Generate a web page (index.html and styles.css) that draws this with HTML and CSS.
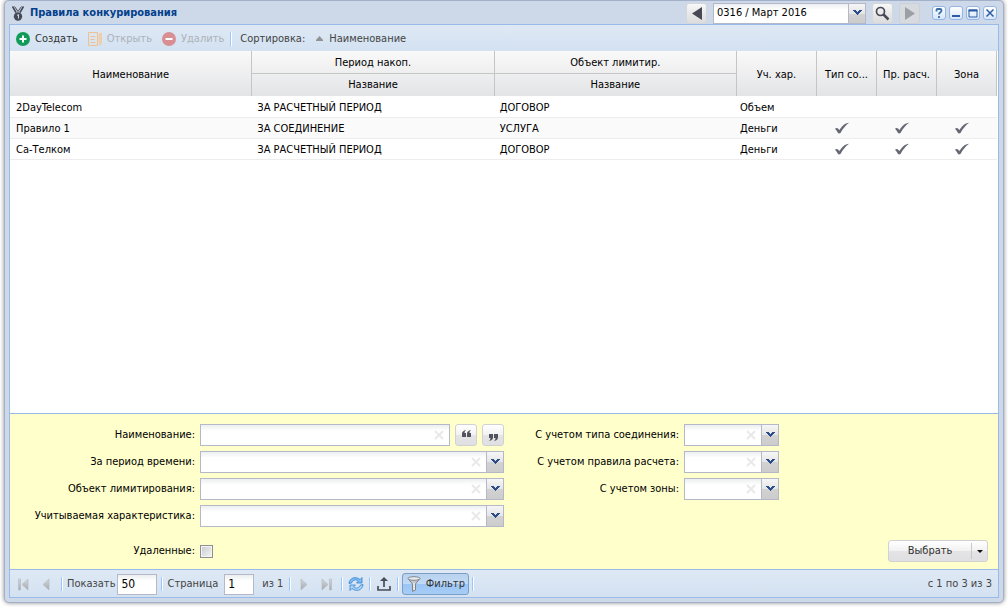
FILE: index.html
```html
<!DOCTYPE html>
<html lang="ru">
<head>
<meta charset="utf-8">
<title>Правила конкурирования</title>
<link rel="stylesheet" href="styles.css">
</head>
<body>
<svg class="defs" aria-hidden="true">
  <defs>
    <linearGradient id="fade" x1="0" y1="0" x2="0" y2="1"><stop offset="0" stop-color="#d4d8dc"/><stop offset="1" stop-color="#a4a9af"/></linearGradient>
    <symbol id="tick" viewBox="0 0 16 12"><path d="M1 6.800 C2 5.800 3.300 5.800 4 6.500 L5.500 8 C8 4 11 1 15 .8 C11.500 3.500 9 6.500 6.500 11 C5.500 11.700 4.500 11.500 4 11 C3.300 9.500 2.200 8 1 6.800Z" fill="#666873"/></symbol>
    <symbol id="cross" viewBox="0 0 10 10"><path d="M1 1 L9 9 M9 1 L1 9" stroke="#e9e9e9" stroke-width="2"/></symbol>
    <symbol id="chev" viewBox="0 0 9 7"><path d="M0 1h3v1h1v1h1v-1h1v-1h3v1h-1v1h-1v1h-1v1h-1v1h-1v-1h-1v-1h-1v-1h-1v-1h-1z" fill="#2b4d8c"/></symbol>
  </defs>
</svg>
<main class="window">
  <header class="titlebar">
    <svg class="medal" width="12" height="15" viewBox="0 0 12 15"><path d="M0.500 0.500 L4 6.500 M11.500 0.500 L8 6.500" stroke="#474b55" stroke-width="1.600"/><path d="M2.500 0.500 L6 5.500 L9.500 .5" fill="none" stroke="#474b55"/><circle cx="6" cy="10.500" r="4.200" fill="#474b55"/><path d="M5 9.500 6.500 8.500V12.500" stroke="#cdd9e8" fill="none"/></svg>
    <h1>Правила конкурирования</h1>
    <div class="period">
      <button class="square" aria-label="Предыдущий период"><svg width="11" height="13" viewBox="0 0 11 13"><path d="M11 0V13L1 6.500z" fill="#474955"/></svg></button>
      <span class="combo month"><select aria-label="Период"><option>0316 / Март 2016</option></select><span class="trigger"><svg width="9" height="7"><use href="#chev"/></svg></span></span>
      <button class="square" aria-label="Найти"><svg width="15" height="15" viewBox="0 0 15 15"><circle cx="5.500" cy="5.500" r="4" fill="none" stroke="#474955" stroke-width="1.700"/><path d="M8.500 8.500 13.500 13.500" stroke="#474955" stroke-width="2.500"/></svg></button>
      <button class="square" disabled aria-label="Следующий период"><svg width="11" height="13" viewBox="0 0 11 13"><path d="M1 0V13L11 6.500z" fill="#9c9fa4"/></svg></button>
    </div>
    <div class="tools">
      <button aria-label="Справка"><svg width="14" height="14" viewBox="0 0 14 14"><path d="M4.500 5.500V4Q4.500 3 5.500 3H8Q9.500 3 9.500 4.500Q9.500 5.500 8.500 6.200Q7 7 7 8.500M7 10v2" fill="none" stroke="#3a6ea8" stroke-width="1.800"/></svg></button>
      <button aria-label="Свернуть"><svg width="14" height="14"><path d="M3 9h8v2H3z" fill="#2d5ca4"/></svg></button>
      <button aria-label="Развернуть"><svg width="14" height="14"><path d="M3 4h8v7H3z" fill="none" stroke="#2d5ca4"/><path d="M2.500 3.500h9v2h-9z" fill="#2d5ca4"/></svg></button>
      <button aria-label="Закрыть"><svg width="14" height="14"><path d="M3.500 3.500l7 7m0-7l-7 7" stroke="#2d5ca4" stroke-width="1.500"/></svg></button>
    </div>
  </header>
  <div class="panel">
    <div class="toolbar">
      <button class="tool create"><svg width="14" height="14" viewBox="0 0 14 14"><circle cx="7" cy="7" r="7" fill="#109b58"/><path d="M7 3.500v7M3.500 7h7" stroke="#fff" stroke-width="2"/></svg>Создать</button>
      <button class="tool open" disabled><svg width="14" height="14" viewBox="0 0 14 14"><path d="M.5.5H9.500V13.500H.5zM2.500 4.500h5M2.500 7.500h4M2.500 10.500h5" fill="none" stroke="#f0c08e"/><path d="M11 2l2.500-1v9.500l-1.500 3-1-3z" fill="#f3cfa9" stroke="#f0c08e" stroke-width=".5"/></svg>Открыть</button>
      <button class="tool" disabled><svg width="14" height="14" viewBox="0 0 14 14"><circle cx="7" cy="7" r="7" fill="#d98e94"/><path d="M3.500 7h7" stroke="#fff" stroke-width="2"/></svg>Удалить</button>
      <span class="sep"></span>
      <span class="sort">Сортировка:</span>
      <button class="tool"><svg width="9" height="5" viewBox="0 0 9 5"><path d="M4.500 0 8 4v1H1V4z" fill="#929292"/></svg><span class="sortname">Наименование</span></button>
    </div>
    <div class="grid">
      <table>
        <colgroup><col><col><col><col class="kind"><col class="flag"><col class="flag"><col class="flag"></colgroup>
        <thead>
          <tr><th rowspan="2">Наименование</th><th class="group">Период накоп.</th><th class="group">Объект лимитир.</th><th rowspan="2">Уч. хар.</th><th rowspan="2">Тип со...</th><th rowspan="2">Пр. расч.</th><th rowspan="2">Зона</th></tr>
          <tr><th class="sub">Название</th><th class="sub">Название</th></tr>
        </thead>
        <tbody>
          <tr><td>2DayTelecom</td><td>ЗА РАСЧЕТНЫЙ ПЕРИОД</td><td>ДОГОВОР</td><td class="mark">Объем</td><td></td><td></td><td></td></tr>
          <tr><td>Правило 1</td><td>ЗА СОЕДИНЕНИЕ</td><td>УСЛУГА</td><td class="mark">Деньги</td><td class="tick"><svg width="16" height="12"><use href="#tick"/></svg></td><td class="tick"><svg width="16" height="12"><use href="#tick"/></svg></td><td class="tick"><svg width="16" height="12"><use href="#tick"/></svg></td></tr>
          <tr><td>Са-Телком</td><td>ЗА РАСЧЕТНЫЙ ПЕРИОД</td><td>ДОГОВОР</td><td class="mark">Деньги</td><td class="tick"><svg width="16" height="12"><use href="#tick"/></svg></td><td class="tick"><svg width="16" height="12"><use href="#tick"/></svg></td><td class="tick"><svg width="16" height="12"><use href="#tick"/></svg></td></tr>
        </tbody>
      </table>
    </div>
    <form class="filter">
      <div class="columns">
        <div class="fields wide">
          <label for="name">Наименование:</label>
          <div class="line">
            <span class="combo text"><input id="name" type="text"><svg class="clear" width="10" height="10"><use href="#cross"/></svg></span>
            <button type="button" class="quote" aria-label="Открывающая кавычка"><svg width="9" height="8" viewBox="0 0 9 8"><path d="M4 0Q2.500 1 2.500 3H4V7H0V3.500Q0 1 4 0M9 0Q7.500 1 7.500 3H9V7H5V3.500Q5 1 9 0" fill="#50525c"/></svg></button>
            <button type="button" class="quote low" aria-label="Закрывающая кавычка"><svg width="9" height="8" viewBox="0 0 9 8"><path d="M0 8Q1.500 7 1.500 5H0V1H4V4.500Q4 7 0 8M5 8Q6.500 7 6.500 5H5V1H9V4.500Q9 7 5 8" fill="#50525c"/></svg></button>
          </div>
          <label for="time">За период времени:</label>
          <span class="combo"><select id="time"><option></option></select><svg class="clear" width="10" height="10"><use href="#cross"/></svg><span class="trigger"><svg width="9" height="7"><use href="#chev"/></svg></span></span>
          <label for="object">Объект лимитирования:</label>
          <span class="combo"><select id="object"><option></option></select><svg class="clear" width="10" height="10"><use href="#cross"/></svg><span class="trigger"><svg width="9" height="7"><use href="#chev"/></svg></span></span>
          <label for="feature">Учитываемая характеристика:</label>
          <span class="combo"><select id="feature"><option></option></select><svg class="clear" width="10" height="10"><use href="#cross"/></svg><span class="trigger"><svg width="9" height="7"><use href="#chev"/></svg></span></span>
        </div>
        <div class="fields narrow">
          <label for="type">С учетом типа соединения:</label>
          <span class="combo"><select id="type"><option></option></select><svg class="clear" width="10" height="10"><use href="#cross"/></svg><span class="trigger"><svg width="9" height="7"><use href="#chev"/></svg></span></span>
          <label for="rule">С учетом правила расчета:</label>
          <span class="combo"><select id="rule"><option></option></select><svg class="clear" width="10" height="10"><use href="#cross"/></svg><span class="trigger"><svg width="9" height="7"><use href="#chev"/></svg></span></span>
          <label for="zone">С учетом зоны:</label>
          <span class="combo"><select id="zone"><option></option></select><svg class="clear" width="10" height="10"><use href="#cross"/></svg><span class="trigger"><svg width="9" height="7"><use href="#chev"/></svg></span></span>
        </div>
      </div>
      <div class="bottom">
        <label for="deleted">Удаленные:</label>
        <input id="deleted" type="checkbox">
        <div class="split"><button type="button" class="choose">Выбрать</button><button type="button" class="more" aria-label="Ещё"><svg width="6" height="3"><path d="M0 0h6L3 3z" fill="#111"/></svg></button></div>
      </div>
    </form>
    <footer class="pager">
      <button class="nav" disabled aria-label="Первая страница"><svg width="11" height="13" viewBox="0 0 11 13"><path d="M.5 1h2v11h-2zM10 1v11L4 6.500z" fill="url(#fade)" stroke="#b4b9be" stroke-width=".6"/></svg></button>
      <button class="nav" disabled aria-label="Предыдущая страница"><svg width="11" height="13" viewBox="0 0 11 13"><path d="M8 1v11L2 6.500z" fill="url(#fade)" stroke="#b4b9be" stroke-width=".6"/></svg></button>
      <span class="sep"></span>
      <label for="show">Показать</label><input id="show" class="size" type="text" value="50">
      <span class="sep"></span>
      <label for="page">Страница</label><input id="page" class="page" type="text" value="1"><span class="total">из 1</span>
      <span class="sep"></span>
      <button class="nav" disabled aria-label="Следующая страница"><svg width="11" height="13" viewBox="0 0 11 13"><path d="M3 1v11l6-5.500z" fill="url(#fade)" stroke="#b4b9be" stroke-width=".6"/></svg></button>
      <button class="nav" disabled aria-label="Последняя страница"><svg width="11" height="13" viewBox="0 0 11 13"><path d="M8.500 1h2v11h-2zM1 1v11l6-5.500z" fill="url(#fade)" stroke="#b4b9be" stroke-width=".6"/></svg></button>
      <span class="sep"></span>
      <button class="act" aria-label="Обновить"><svg width="16" height="16" viewBox="0 0 16 16"><path d="M1 7.500C1.500 1.500 8 0 12 3.500l2-2v5.500H8.500l2-2C8 3 4.500 4 3.500 7z" fill="#7fbdf3" stroke="#3482cb" stroke-width=".8"/><path d="M15 8.500c-.5 6-7 7.500-11 4l-2 2V9h5.500l-2 2c2.500 2 6 1 7-2z" fill="#a9d5f8" stroke="#3482cb" stroke-width=".8"/></svg></button>
      <span class="sep"></span>
      <button class="act" aria-label="Экспорт"><svg width="16" height="16" viewBox="0 0 16 16"><path d="M2 10v4h12v-4M8 4v7" fill="none" stroke="#494d57" stroke-width="1.700"/><path d="M8 1l4 4H4z" fill="#494d57"/></svg></button>
      <span class="sep"></span>
      <button class="toggle"><svg width="14" height="16" viewBox="0 0 14 16"><path d="M1.500 3 5.500 8v7.500l3-1.500V8l4-5z" fill="#c4c8cd" stroke="#7d858d"/><path d="M7 7v7" stroke="#fff"/><ellipse cx="7" cy="2.500" rx="6" ry="1.800" fill="#e8ebee" stroke="#7d858d"/></svg>Фильтр</button>
      <span class="sep last"></span>
      <span class="count">с 1 по 3 из 3</span>
    </footer>
  </div>
</main>
</body>
</html>
```
FILE: styles.css
```css
* { box-sizing: border-box; }
body {
  margin: 0;
  height: 100vh;
  padding: 0 4px 4px;
  display: flex;
  background: #fff;
  color: #000;
  font: 11px/14px Tahoma, "DejaVu Sans Condensed", "Noto Sans", sans-serif;
}
button, input, select { font: inherit; color: inherit; margin: 0; }
button { padding: 0; border: 0; background: none; display: flex; align-items: center; justify-content: center; }
svg { display: block; flex: none; }
.defs { position: absolute; width: 0; height: 0; }

.window {
  flex: 1;
  min-width: 0;
  display: flex;
  flex-direction: column;
  padding: 0 4px 4px;
  background: #cdd9e8;
  border: 1px solid #a2b0c9;
  border-radius: 5px;
  box-shadow: 0 0 4px #888;
}
.titlebar { display: flex; align-items: center; height: 23px; padding: 1px 2px 0 3px; }
h1 { flex: 1; margin: 0 0 0 6px; font-size: 11px; line-height: 14px; font-weight: bold; color: #04408c; }
.period { display: flex; gap: 6px; }
.square {
  width: 21px;
  height: 21px;
  border-radius: 3px;
  border: 1px solid #d4d7db;
  background: linear-gradient(#f8f8f8, #e9e9e9 50%, #dcdcdd);
}
.square:disabled { border-color: #cdd1d5; background: #d7dbdf; }
.tools { display: flex; gap: 3px; margin-left: 12px; }
.tools button { width: 14px; height: 14px; border: 1px solid #94b6e6; border-radius: 3px; background: linear-gradient(#fff, #d5e6fb); }

.combo { position: relative; display: block; height: 22px; }
.combo select, .combo input {
  appearance: none;
  display: block;
  width: 100%;
  height: 100%;
  padding: 0 22px 0 3px;
  border: 1px solid #b5b8c8;
  border-radius: 0;
  background: linear-gradient(#eceff0, #fff 6px);
}
.trigger {
  position: absolute;
  top: 1px;
  right: 1px;
  bottom: 1px;
  width: 17px;
  display: flex;
  align-items: center;
  justify-content: center;
  padding-bottom: 2px;
  border-left: 1px solid #b5b8c8;
  background: linear-gradient(#f6f6f6, #e5e5e5 50%, #d2d2d2 51%, #ccc);
  pointer-events: none;
}
.clear { position: absolute; top: 6px; right: 23px; }
.text .clear { right: 6px; }
.month { width: 153px; height: 21px; }

.panel { flex: 1; min-height: 0; display: flex; flex-direction: column; border: 1px solid #99bbe8; }
.toolbar {
  display: flex;
  align-items: center;
  height: 26px;
  padding: 1px 6px 0;
  color: #444;
  background: linear-gradient(#dfe9f5, #d3e1f1);
}
.tool { gap: 5px; margin-right: 10px; color: #333; }
.tool:disabled { color: #acb2b9; }
.sortname { color: #444; }
.sep { width: 2px; height: 14px; margin: 0 4px; border-left: 1px solid #98c8ff; border-right: 1px solid #fff; }
.toolbar .sep { margin: 0 8px 0 -4px; }
.sort { margin-right: 10px; }

.grid { flex: 1; min-height: 0; padding-right: 1px; overflow: hidden; background: #fff; }
table { width: 100%; table-layout: fixed; border-collapse: separate; border-spacing: 0; }
.kind { width: 80px; }
.flag { width: 60px; }
thead { background: linear-gradient(#f9f9f9, #e3e4e6); }
th { height: 22px; padding: 2px 4px 0; font-weight: normal; text-align: center; border-right: 1px solid #c5c5c5; }
th.group { height: 23px; border-bottom: 1px solid #c5c5c5; }
th.sub { padding-top: 0; }
td { height: 21px; padding: 2px 4px 0 6px; border-bottom: 1px solid #ededed; white-space: nowrap; }
td + td { padding-left: 5px; }
td.mark { padding-left: 3px; }
tbody tr:first-child td { height: 22px; }
tbody tr:nth-child(2) td { background: #fafafa; }
td.tick { padding: 0 10px 0 0; }
.tick svg { margin: auto; }

.filter { padding: 10px 10px 7px; border-top: 1px solid #99bbe8; background: #ffc; }
.columns { display: flex; gap: 24px; }
.fields { display: grid; align-items: center; align-content: start; gap: 5px; }
.fields label, .bottom label { text-align: right; white-space: nowrap; }
.wide { grid-template-columns: 175px 304px; }
.narrow { grid-template-columns: 151px 95px; }
.line { display: flex; gap: 5px; }
.text { flex: 1; }
.quote, .split { border: 1px solid #d1d1d1; border-radius: 3px; background: linear-gradient(#fff, #f2f2f2 48%, #e4e4e6 52%, #e0e0e3); }
.quote { width: 22px; height: 22px; }
.quote svg { margin-bottom: 3px; }
.low svg { margin: 3px 0 0; }
.bottom { display: flex; align-items: center; gap: 5px; margin-top: 13px; }
.bottom label { width: 175px; }
.bottom input {
  appearance: none;
  width: 13px;
  height: 13px;
  margin: 0;
  border: 1px solid #8e8f8f;
  background: linear-gradient(135deg, #c8cbd0, #f4f4f4);
  box-shadow: inset 0 0 0 1px #f4f4f4;
}
.split { display: flex; align-items: center; width: 100px; height: 22px; margin-left: auto; color: #333; }
.choose { flex: 1; height: 16px; border-right: 1px solid #c9c9c9; }
.more { width: 15px; height: 20px; }

.pager {
  display: flex;
  align-items: center;
  height: 28px;
  padding: 1px 6px 0 5px;
  color: #444;
  border-top: 1px solid #99bbe8;
  background: linear-gradient(#dfe9f5, #d3e1f1);
}
.nav { width: 16px; height: 16px; margin: 0 7px 0 0; }
.nav + .sep { margin-left: 0; }
.act { width: 16px; height: 16px; margin: 0 1px; }
.pager input { height: 21px; padding: 0 3px; border: 1px solid #b5b8c8; background: linear-gradient(#eceff0, #fff 6px); color: #000; font-size: 12px; }
.pager .size { width: 40px; margin-left: 2px; }
.pager .page { width: 30px; margin: 0 8px 0 6px; }
.total { margin-right: 2px; }
.toggle { gap: 5px; width: 67px; height: 22px; margin: 0 -1px; border: 1px solid #7b9ec5; border-radius: 3px; background: linear-gradient(#b8d2ee, #c1dbf7 48%, #9cc5f3 52%, #a6cdf7); color: #333; }
.count { margin-left: auto; }
```
